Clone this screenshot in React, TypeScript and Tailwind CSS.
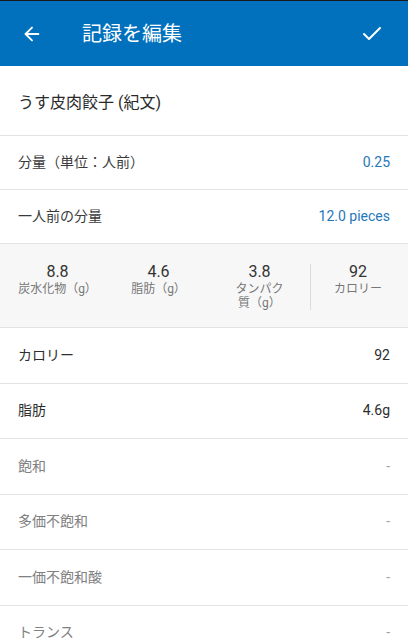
import { ArrowLeft, Check } from 'lucide-react';

const FONT = "font-['Roboto','Noto_Sans_CJK_JP',sans-serif]";

const nutrients: { label: string; value: string; strong?: boolean }[] = [
  { label: 'カロリー', value: '92', strong: true },
  { label: '脂肪', value: '4.6g', strong: true },
  { label: '飽和', value: '-' },
  { label: '多価不飽和', value: '-' },
  { label: '一価不飽和酸', value: '-' },
  { label: 'トランス', value: '-' },
];

const summary = [
  { value: '8.8', label: '炭水化物（g）' },
  { value: '4.6', label: '脂肪（g）' },
  { value: '3.8', label: 'タンパク\n質（g）' },
];

export default function App() {
  return (
    <div className={`${FONT} h-[640px] w-[408px] overflow-hidden bg-white`}>
      <div className="h-px bg-[#1a1a1a]" />
      <header className="flex h-[65px] items-center bg-[#0170bd] text-white">
        <button className="flex w-[64px] justify-center">
          <ArrowLeft size={22} strokeWidth={2} />
        </button>
        <h1 className="ml-[18px] flex-1 text-[20px]">記録を編集</h1>
        <button className="flex w-[64px] justify-center pr-2">
          <Check size={24} strokeWidth={2} />
        </button>
      </header>

      <div className="flex h-[70px] items-center border-b border-[#e3e3e3] px-[18px] pt-1 text-[16px] text-[#2a2a2a]">
        うす皮肉餃子 (紀文)
      </div>

      <div className="flex h-[54px] items-center justify-between border-b border-[#e3e3e3] px-[18px] text-[14px]">
        <span className="text-[#3a3a3a]">分量（単位：人前）</span>
        <span className="text-[#1f78ba]">0.25</span>
      </div>
      <div className="flex h-[54px] items-center justify-between border-b border-[#e3e3e3] px-[18px] text-[14px]">
        <span className="text-[#3a3a3a]">一人前の分量</span>
        <span className="text-[#1f78ba]">12.0 pieces</span>
      </div>

      <div className="flex h-[84px] items-start border-b border-[#e3e3e3] bg-[#f7f7f7] pl-[7px] pt-[18px]">
        {summary.map((s) => (
          <div key={s.value} className="flex w-[101px] flex-col items-center">
            <span className="text-[16px] leading-[20px] text-[#333]">{s.value}</span>
            <span className="whitespace-pre-line text-center text-[12px] leading-[14px] text-[#777]">
              {s.label}
            </span>
          </div>
        ))}
        <div className="mt-[2px] h-[46px] w-px bg-[#dcdcdc]" />
        <div className="flex flex-1 flex-col items-center pr-[3px]">
          <span className="text-[16px] leading-[20px] text-[#333]">92</span>
          <span className="text-[12px] leading-[14px] text-[#777]">カロリー</span>
        </div>
      </div>

      {nutrients.map((n) => (
        <div
          key={n.label}
          className="flex h-[55.5px] items-center justify-between border-b border-[#e3e3e3] px-[18px] text-[14px]"
        >
          <span className={n.strong ? 'text-[#2e2e2e]' : 'text-[#808080]'}>{n.label}</span>
          <span className={n.strong ? 'text-[#2e2e2e]' : 'text-[#a0a0a0]'}>{n.value}</span>
        </div>
      ))}
    </div>
  );
}
